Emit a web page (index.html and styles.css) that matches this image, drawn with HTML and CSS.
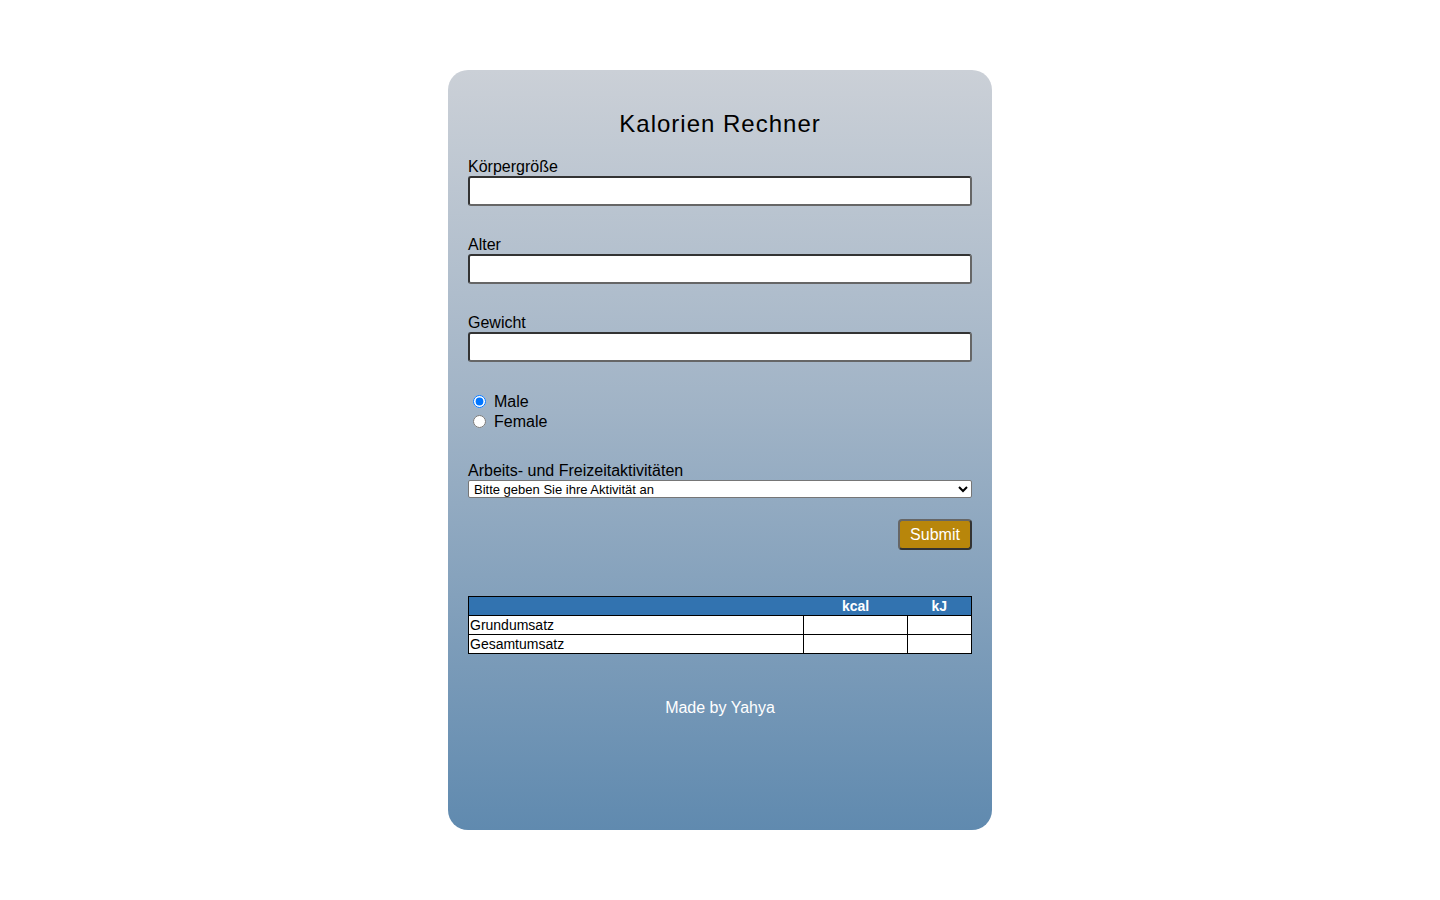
FILE: index.html
```html
<!DOCTYPE html>
<html lang="de">
<head>
<meta charset="utf-8">
<title>Kalorien Rechner</title>
<link rel="stylesheet" href="styles.css">
</head>
<body>
<main class="card">
  <h1 class="title">Kalorien Rechner</h1>
  <form class="form">
    <div class="field">
      <label class="label" for="groesse">Körpergröße</label>
      <input class="input" id="groesse" type="text">
    </div>
    <div class="field">
      <label class="label" for="alter">Alter</label>
      <input class="input" id="alter" type="text">
    </div>
    <div class="field">
      <label class="label" for="gewicht">Gewicht</label>
      <input class="input" id="gewicht" type="text">
    </div>
    <div class="radios">
      <label class="radio"><input type="radio" name="g" checked> Male</label>
      <label class="radio"><input type="radio" name="g"> Female</label>
    </div>
    <div class="field activity">
      <label class="label" for="akt">Arbeits- und Freizeitaktivitäten</label>
      <select class="select" id="akt">
        <option>Bitte geben Sie ihre Aktivität an</option>
      </select>
    </div>
    <div class="actions">
      <button class="submit" type="button">Submit</button>
    </div>
  </form>
  <table class="results">
    <thead>
      <tr><th class="c1"></th><th class="c2">kcal</th><th class="c3">kJ</th></tr>
    </thead>
    <tbody>
      <tr><td>Grundumsatz</td><td></td><td></td></tr>
      <tr><td>Gesamtumsatz</td><td></td><td></td></tr>
    </tbody>
  </table>
  <p class="footer">Made by Yahya</p>
</main>
</body>
</html>
```
FILE: styles.css
```css
* { box-sizing: border-box; }
html, body { margin: 0; padding: 0; background: #fff; }
body {
  font-family: "Liberation Sans", Arial, sans-serif;
  color: #000;
  display: flex;
  justify-content: center;
  padding-top: 70px;
}
.card {
  width: 544px;
  height: 760px;
  border-radius: 20px;
  background: linear-gradient(to bottom, #cbd0d7 0%, #a0b3c6 45%, #608aaf 100%);
  padding: 0 20px;
  display: flex;
  flex-direction: column;
}
.title {
  margin: 39px 0 0;
  font-size: 24px;
  font-weight: normal;
  letter-spacing: 1px;
  line-height: 30px;
  text-align: center;
}
.form { display: flex; flex-direction: column; margin-top: 18px; }
.field { display: flex; flex-direction: column; margin-bottom: 29px; }
.label { font-size: 16px; line-height: 18px; padding-top: 1px; }
.input {
  height: 30px;
  width: 100%;
  border: 2px solid #333;
  border-right-color: #666;
  border-bottom-color: #666;
  border-radius: 3px;
  background: #fff;
  font-size: 16px;
}
.radios { display: flex; flex-direction: column; margin-top: 1px; margin-bottom: 29px; }
.radio { font-size: 16px; line-height: 20px; display: flex; align-items: center; }
.radio input { margin: 0 8px 2px 5px; width: 13px; height: 13px; }
.activity { margin-bottom: 21px; }
.select {
  height: 18px;
  width: 100%;
  font-family: "Liberation Sans", Arial, sans-serif;
  font-size: 13px;
  border: 1px solid #767676;
  border-radius: 2px;
  background: #fff;
  padding: 0 1px;
}
.actions { display: flex; justify-content: flex-end; }
.submit {
  width: 74px;
  height: 31px;
  background: #b8860b;
  color: #fff;
  border: 2px solid #333;
  border-top-color: #666;
  border-left-color: #666;
  border-radius: 4px;
  font-family: "Liberation Sans", Arial, sans-serif;
  font-size: 16px;
  padding: 0;
}
.results {
  margin-top: 46px;
  width: 504px;
  border-collapse: collapse;
  border: 1px solid #000;
  font-size: 14px;
}
.results th {
  background: #3273b0;
  color: #fff;
  font-weight: bold;
  height: 19px;
  line-height: 17px;
  padding: 0;
  text-align: center;
}
.results td {
  background: #fff;
  border: 1px solid #000;
  height: 19px;
  line-height: 17px;
  padding: 0 1px;
}
.c1 { width: 335px; }
.c2 { width: 104px; }
.c3 { width: 64px; }
.footer {
  margin: 45px 0 0;
  text-align: center;
  color: #fff;
  font-size: 16px;
  line-height: 18px;
}
```
